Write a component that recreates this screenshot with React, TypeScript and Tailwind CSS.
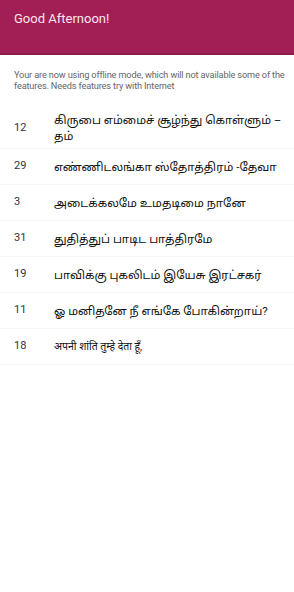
import React from "react";

const songs: { n: string; t: string; hi?: boolean }[] = [
  { n: "12", t: "கிருபை எம்மைச் சூழ்ந்து கொள்ளும் – தம்" },
  { n: "29", t: "எண்ணிடலங்கா ஸ்தோத்திரம் -தேவா" },
  { n: "3", t: "அடைக்கலமே உமதடிமை நானே" },
  { n: "31", t: "துதித்துப் பாடிட பாத்திரமே" },
  { n: "19", t: "பாவிக்கு புகலிடம் இயேசு இரட்சகர்" },
  { n: "11", t: "ஓ மனிதனே நீ எங்கே போகின்றாய்?" },
  { n: "18", t: "अपनी शांति तुम्हे देता हूँ,", hi: true },
];

export default function App() {
  return (
    <div
      className="w-[294px] h-[592px] bg-white overflow-hidden"
      style={{ fontFamily: "Roboto, 'Noto Sans', 'Noto Sans Tamil', 'Noto Sans Devanagari', sans-serif" }}
    >
      <div className="h-[55px] bg-[#a21f56] border-b-2 border-[#8c1a4a] px-[14px] pt-[11px]">
        <div className="text-[13px] text-[#fbe4ee] leading-[16px]">Good Afternoon!</div>
      </div>
      <div className="pl-[14px] pr-[4px] pt-[14px] pb-[17px] text-[9.2px] leading-[11px] text-[#666] tracking-[-0.15px]">
        Your are now using offline mode, which will not available some of the features. Needs features try with Internet
      </div>
      <div>
        {songs.map((s) => (
          <div
            key={s.n}
            className="flex items-center min-h-[36px] py-[4px] border-b border-[#f5f5f5]"
          >
            <div className="w-[54px] shrink-0 pl-[14px] text-[11px] text-[#333]">{s.n}</div>
            <div
              className={
                s.hi
                  ? "flex-1 pr-[12px] text-[10.5px] leading-[16px] text-[#111]"
                  : "flex-1 pr-[12px] text-[11.5px] leading-[16px] text-[#111]"
              }
            >
              {s.t}
            </div>
          </div>
        ))}
      </div>
    </div>
  );
}
